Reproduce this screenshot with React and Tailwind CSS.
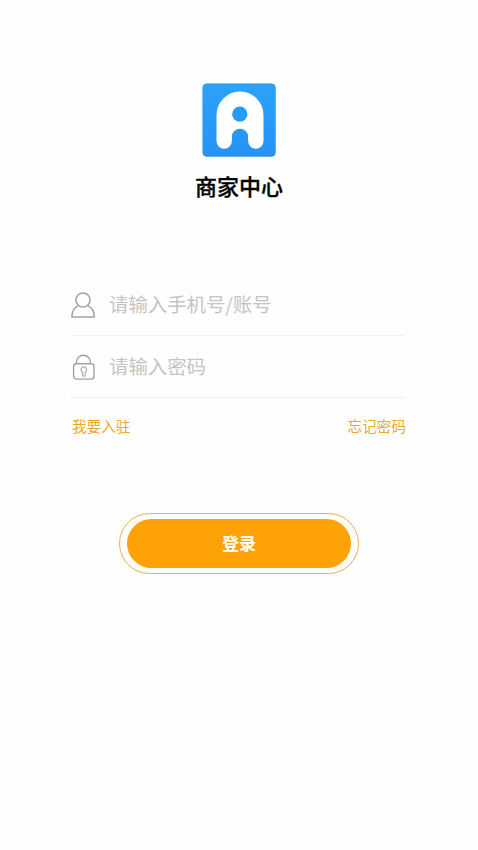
// src/pages/Login/MerchantLogin.jsx
import { useState } from 'react';

const Logo = () => (
  <svg className="w-[74px] h-[74px]" viewBox="0 0 74 74" fill="none">
    <defs>
      <linearGradient id="logoBg" x1="0" y1="0" x2="0" y2="1">
        <stop offset="0" stopColor="#2ba3f9" />
        <stop offset="1" stopColor="#2493f5" />
      </linearGradient>
    </defs>
    <rect x="0.8" y="0.8" width="72.6" height="72.6" rx="4" fill="url(#logoBg)" stroke="#2b8fe0" strokeWidth="0.6" />
    <path
      d="M14.5 32a23.5 23.5 0 0 1 47 0V58a7.7 7.7 0 0 1-15.4 0v-4.2a8 8 0 0 0-16.2 0V58a7.7 7.7 0 0 1-15.4 0Z"
      fill="#fff"
    />
    <circle cx="37.8" cy="31.2" r="7.6" fill="#279bf6" />
  </svg>
);

const UserIcon = () => (
  <svg className="w-6 h-[26px]" viewBox="0 0 24 26" fill="none" stroke="#a5a29d" strokeWidth="1.5" strokeLinejoin="round">
    <circle cx="12" cy="8" r="7.1" />
    <path d="M7.4 13.6C3.4 15.2 0.9 18.6 0.9 24.9H23.3C23.3 18.6 20.6 15.2 16.6 13.6" />
  </svg>
);

const LockIcon = () => (
  <svg className="w-6 h-[26px]" viewBox="0 0 24 26" fill="none" stroke="#a5a29d" strokeWidth="1.4">
    <path d="M5.4 9.8V8.2a7 7 0 0 1 14 0v1.6" />
    <rect x="2.6" y="9.8" width="20.4" height="15.3" rx="2.8" />
    <path d="M11.4 18a2.8 2.8 0 1 1 2.8 0v2.8a1.4 1.4 0 0 1-2.8 0Z" strokeWidth="1.1" />
  </svg>
);

const Field = ({ icon, ...props }) => (
  <label className="flex items-center h-[62px] border-b border-[#f2f2f2]">
    {icon}
    <input
      className="ml-[14px] flex-1 min-w-0 h-[30px] mb-[2px] text-[19.4px] text-gray-800 placeholder:text-[#c4c4c8] outline-none bg-transparent"
      {...props}
    />
  </label>
);

const App = () => {
  const [account, setAccount] = useState('');
  const [password, setPassword] = useState('');

  return (
    <div className="min-h-screen bg-[#fefefe] flex flex-col items-center font-['Noto_Sans_CJK_SC',sans-serif]">
      {/* Brand */}
      <div className="mt-[83px] flex flex-col items-center">
        <Logo />
        <h1 className="mt-[12px] text-[22px] leading-8 font-medium text-black [-webkit-text-stroke:0.3px_black]">
          商家中心
        </h1>
      </div>

      {/* Login form */}
      <form className="mt-[73px] w-full pl-[71px] pr-[73px]" onSubmit={(e) => e.preventDefault()}>
        <Field
          icon={<UserIcon />}
          type="text"
          placeholder="请输入手机号/账号"
          value={account}
          onChange={(e) => setAccount(e.target.value)}
        />
        <Field
          icon={<LockIcon />}
          type="password"
          placeholder="请输入密码"
          value={password}
          onChange={(e) => setPassword(e.target.value)}
        />

        <div className="mt-[17px] ml-px -mr-px flex justify-between text-[14.6px] leading-[22px] text-[#eba92c]">
          <button type="button">我要入驻</button>
          <button type="button">忘记密码</button>
        </div>

        <div className="mt-[76px] ml-12 w-[240px] h-[61px] py-[5px] px-[7px] rounded-full border border-[#e9b050] bg-[#fffefa]">
          <button
            type="submit"
            className="w-full h-full pb-[2px] rounded-full bg-[#ffa208] text-[17px] leading-6 font-bold text-white"
          >
            登录
          </button>
        </div>
      </form>
    </div>
  );
};

export default App;
